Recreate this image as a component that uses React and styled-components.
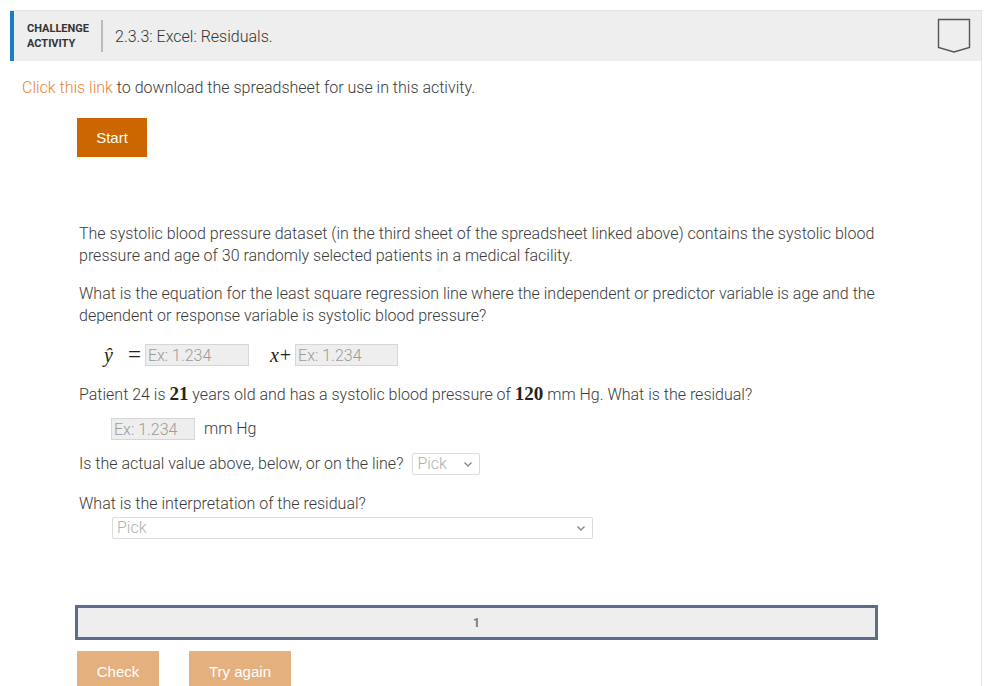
import React from "react";
import styled, { createGlobalStyle } from "styled-components";

let Global = createGlobalStyle`
  body {
    margin: 0;
    background: #fff;
    font-family: Roboto, "Liberation Sans", sans-serif;
    color: #333;
  }
`;

let Page = styled.div`
  padding: 10px 4px 0 10px;
  height: 686px;
  overflow: hidden;
  box-sizing: border-box;
`;

let Card = styled.div`
  border: 1px solid #e4e4e4;
  border-left: none;
  height: 700px;
`;

let Header = styled.div`
  display: flex;
  align-items: center;
  height: 50px;
  background: #eeeeee;
  border-left: 4px solid #1a7fc1;
  padding: 0 10px 0 13px;
`;

let Label = styled.div`
  font-size: 11px;
  font-weight: 700;
  line-height: 15px;
  color: #333;
  padding-right: 12px;
  border-right: 2px solid #bbb;
  height: 32px;
  display: flex;
  flex-direction: column;
  justify-content: center;
`;

let Title = styled.div`
  flex: 1;
  font-size: 16px;
  font-weight: 300;
  color: #333;
  padding-left: 12px;
`;

let Body = styled.div`
  padding: 0 12px;
  font-size: 16px;
  font-weight: 300;
  line-height: 22px;
  color: #3a3a3a;
`;

let Intro = styled.p`
  margin: 16px 0 0;
  a {
    color: #e8843a;
    text-decoration: none;
  }
`;

let Button = styled.button`
  display: block;
  border: none;
  padding: 0;
  height: ${p => p.$h || 39}px;
  width: ${p => p.$w}px;
  background: ${p => (p.$faded ? "#e4b07d" : "#cc6600")};
  color: #fff;
  font-family: "Liberation Sans", Arial, sans-serif;
  font-size: 15px;
`;

let StartWrap = styled.div`
  padding: 19px 0 0 55px;
`;

let Question = styled.div`
  padding: 0 0 0 57px;
  margin-top: 66px;
  width: 810px;
`;

let Para = styled.p`
  margin: ${p => p.$top ?? 16}px 0 0;
  display: flex;
  align-items: center;
  flex-wrap: wrap;
  padding-left: ${p => p.$indent || 0}px;
`;

let Block = styled.p`
  margin: ${p => p.$top ?? 16}px 0 0;
`;

let Math = styled.span`
  font-family: "Liberation Serif", "DejaVu Serif", serif;
  font-style: ${p => (p.$upright ? "normal" : "italic")};
  font-weight: ${p => (p.$bold ? 700 : 400)};
  font-size: ${p => p.$size || 19}px;
  line-height: 22px;
  color: #222;
`;

let Sign = styled(Math).attrs(p => ({ $upright: true, $size: p.$size || 23 }))`
  margin: 0 ${p => p.$right || 0}px 0 ${p => p.$left || 0}px;
`;

let Input = styled.input`
  box-sizing: border-box;
  height: 22px;
  width: ${p => p.$w}px;
  border: 1px solid #d6d6d6;
  background: #eeeeee;
  font-family: Roboto, "Liberation Sans", sans-serif;
  font-weight: 300;
  font-size: 16px;
  padding: 0 2px;
  margin: ${p => p.$m || "0"};
  &::placeholder {
    color: #9a9a9a;
  }
`;

let Select = styled.div`
  box-sizing: border-box;
  display: flex;
  align-items: center;
  justify-content: space-between;
  height: 22px;
  width: ${p => p.$w}px;
  border: 1px solid #dcdcdc;
  border-radius: 2px;
  background: #fff;
  color: #b0b0b0;
  font-size: 16px;
  padding: 0 6px 0 4px;
  margin: ${p => p.$m || "0"};
`;

let Unit = styled.span`
  margin-left: 9px;
`;

let Progress = styled.div`
  box-sizing: border-box;
  margin: 66px 0 0 53px;
  width: 803px;
  height: 35px;
  border: 3px solid #5b6d8a;
  background: #eeeeee;
  display: flex;
  align-items: center;
  justify-content: center;
  font-size: 12px;
  font-weight: 700;
  color: #777;
`;

let Actions = styled.div`
  display: flex;
  gap: 30px;
  margin: 11px 0 0 55px;
`;

function Chevron() {
  return (
    <svg width="10" height="7" viewBox="0 0 10 7">
      <path d="M1.5 1.5 L5 5 L8.5 1.5" fill="none" stroke="#888" strokeWidth="1.4" />
    </svg>
  );
}

function Bookmark() {
  return (
    <svg width="34" height="36" viewBox="0 0 34 36">
      <path d="M1.5 1.5 H32.5 V29.5 L17 34 L1.5 29.5 Z" fill="none" stroke="#555" strokeWidth="1.4" />
    </svg>
  );
}

export default function App() {
  return (
    <Page>
      <Global />
      <Card>
        <Header>
          <Label>
            <span>CHALLENGE</span>
            <span>ACTIVITY</span>
          </Label>
          <Title>2.3.3: Excel: Residuals.</Title>
          <Bookmark />
        </Header>
        <Body>
          <Intro>
            <a href="#">Click this link</a> to download the spreadsheet for use in this activity.
          </Intro>
          <StartWrap>
            <Button $w={70}>Start</Button>
          </StartWrap>
          <Question>
            <Block $top={0}>
              The systolic blood pressure dataset (in the third sheet of the spreadsheet linked above) contains the systolic blood
              pressure and age of 30 randomly selected patients in a medical facility.
            </Block>
            <Block>
              What is the equation for the least square regression line where the independent or predictor variable is age and the
              dependent or response variable is systolic blood pressure?
            </Block>
            <Para $indent={25} $top={17}>
              <Math $size={20}>ŷ</Math>
              <Sign $left={15} $right={4}>=</Sign>
              <Input $w={104} placeholder="Ex: 1.234" />
              <Math $size={20} style={{ marginLeft: 21 }}>x</Math>
              <Sign $size={20} $left={1} $right={4}>+</Sign>
              <Input $w={103} placeholder="Ex: 1.234" />
            </Para>
            <Block $top={17}>
              Patient 24 is <Math $bold $upright>21</Math> years old and has a systolic blood pressure of{" "}
              <Math $bold $upright>120</Math> mm Hg. What is the residual?
            </Block>
            <Para $indent={32} $top={12}>
              <Input $w={84} placeholder="Ex: 1.234" />
              <Unit>mm Hg</Unit>
            </Para>
            <Para $top={13}>
              Is the actual value above, below, or on the line?
              <Select $w={68} $m="0 0 0 9px">
                Pick <Chevron />
              </Select>
            </Para>
            <Block $top={18}>What is the interpretation of the residual?</Block>
            <Select $w={481} $m="2px 0 0 33px">
              Pick <Chevron />
            </Select>
          </Question>
          <Progress>1</Progress>
          <Actions>
            <Button $faded $w={82} $h={40}>Check</Button>
            <Button $faded $w={102} $h={40}>Try again</Button>
          </Actions>
        </Body>
      </Card>
    </Page>
  );
}
